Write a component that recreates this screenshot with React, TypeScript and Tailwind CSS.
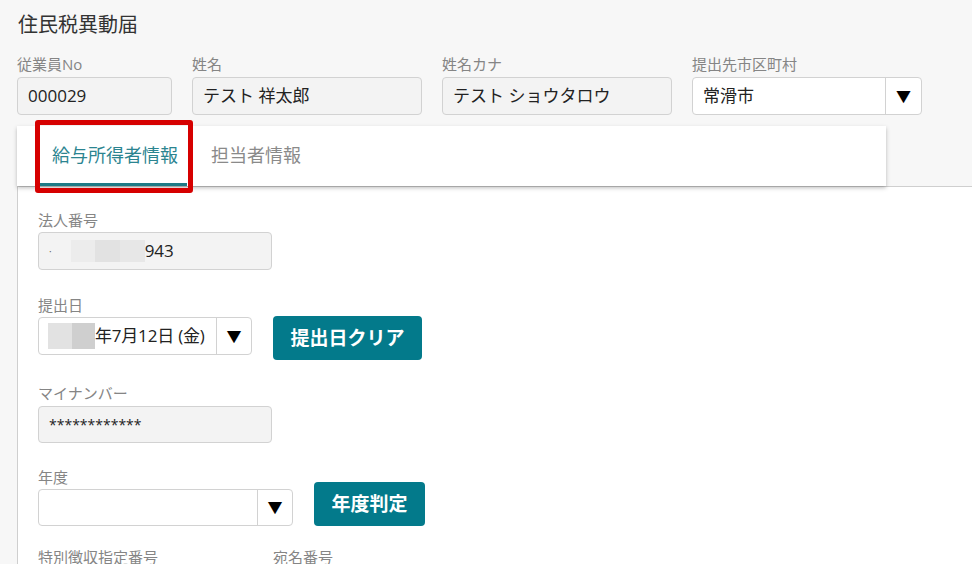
import React from 'react'

const font = { fontFamily: '"Open Sans", "Noto Sans CJK JP", sans-serif' }

function Label({ children }: { children: React.ReactNode }) {
  return <div className="text-[15px] leading-[20px] text-[#858585]">{children}</div>
}

function ReadOnly({ w, h = 38, children }: { w: string; h?: number; children: React.ReactNode }) {
  return (
    <div
      className={`${w} flex items-center rounded-[4px] border border-[#d2d2d2] bg-[#f3f3f3] px-[10px] text-[17px] text-[#222]`}
      style={{ height: h }}
    >
      {children}
    </div>
  )
}

function Select({ w, arrow, h = 38, children }: { w: string; arrow: string; h?: number; children?: React.ReactNode }) {
  return (
    <div
      className={`${w} flex rounded-[4px] border border-[#d2d2d2] bg-white text-[17px] text-[#222]`}
      style={{ height: h }}
    >
      <div className="flex min-w-0 flex-1 items-center overflow-hidden whitespace-nowrap pl-[10px]">{children}</div>
      <div className={`${arrow} flex shrink-0 items-center justify-center border-l border-[#d2d2d2] text-[15px] text-black`}>▼</div>
    </div>
  )
}

export default function App() {
  return (
    <div className="h-[564px] w-[972px] overflow-hidden bg-[#f7f7f7]" style={font}>
      {/* Header */}
      <div className="pl-[18px] pt-[12px] text-[20px] leading-[26px] text-[#333]">住民税異動届</div>

      <div className="mt-[16px] flex gap-[20px] pl-[17px]">
        <div>
          <Label>従業員No</Label>
          <div className="mt-[3px]">
            <ReadOnly w="w-[155px]">000029</ReadOnly>
          </div>
        </div>
        <div>
          <Label>姓名</Label>
          <div className="mt-[3px]">
            <ReadOnly w="w-[230px]">テスト 祥太郎</ReadOnly>
          </div>
        </div>
        <div>
          <Label>姓名カナ</Label>
          <div className="mt-[3px]">
            <ReadOnly w="w-[230px]">テスト ショウタロウ</ReadOnly>
          </div>
        </div>
        <div>
          <Label>提出先市区町村</Label>
          <div className="mt-[3px]">
            <Select w="w-[230px]" arrow="w-[36px]">常滑市</Select>
          </div>
        </div>
      </div>

      {/* Tabs + content */}
      <div className="relative ml-[17px] mt-[11px]">
        <div className="relative z-10 flex h-[60px] w-[869px] bg-white pl-[23px] shadow-[0_2px_4px_rgba(0,0,0,0.25)]">
          <div className="flex items-center border-b-[3px] border-[#1d7a86] pl-[12px] pr-[9px] pt-[1px] text-[18px] text-[#2b8490]">
            給与所得者情報
          </div>
          <div className="flex items-center pl-[24px] pr-[12px] pb-[2px] text-[18px] text-[#8a8a8a]">担当者情報</div>
        </div>

        {/* highlight frame */}
        <div className="pointer-events-none absolute left-[18px] top-[-6px] z-20 h-[73px] w-[158px] rounded-[3px] border-[5px] border-[#d60000]" />

        <div className="h-[400px] border-l border-t border-[#cfcfcf] bg-white pl-[20px]">
          <div className="pt-[23px]">
            <Label>法人番号</Label>
            <div className="mt-[2px]">
              <ReadOnly w="w-[234px]">
                <span className="mr-[19px] text-[10px] text-[#666]">·</span>
                <span className="h-[22px] w-[24px] bg-[#ececec]" />
                <span className="h-[22px] w-[25px] bg-[#e2e2e2]" />
                <span className="h-[22px] w-[25px] bg-[#e7e7e7]" />
                <span>943</span>
              </ReadOnly>
            </div>
          </div>

          <div className="mt-[25px] flex items-start gap-[21px]">
            <div>
              <Label>提出日</Label>
              <div className="mt-[2px]">
                <Select w="w-[214px]" arrow="w-[35px]">
                  <span className="-ml-[1px] h-[26px] w-[24px] shrink-0 bg-[#e2e2e2]" />
                  <span className="h-[26px] w-[23px] shrink-0 bg-[#cfcfcf]" />
                  <span className="tracking-[-0.2px]">年7月12日 (金)</span>
                </Select>
              </div>
            </div>
            <button className="mt-[21px] h-[44px] w-[149px] rounded-[4px] bg-[#037a8b] text-[19px] font-bold text-white">
              提出日クリア
            </button>
          </div>

          <div className="mt-[23px]">
            <Label>マイナンバー</Label>
            <div className="mt-[3px]">
              <ReadOnly w="w-[234px]" h={37}>
                <span className="text-[14px]">************</span>
              </ReadOnly>
            </div>
          </div>

          <div className="mt-[24px] flex items-end gap-[21px]">
            <div>
              <Label>年度</Label>
              <div className="mt-[2px]">
                <Select w="w-[255px]" arrow="w-[35px]" h={37} />
              </div>
            </div>
            <button className="h-[44px] w-[111px] rounded-[4px] bg-[#037a8b] text-[19px] font-bold text-white">
              年度判定
            </button>
          </div>

          <div className="mt-[21px] flex">
            <div className="w-[235px]">
              <Label>特別徴収指定番号</Label>
            </div>
            <Label>宛名番号</Label>
          </div>
        </div>
      </div>
    </div>
  )
}
